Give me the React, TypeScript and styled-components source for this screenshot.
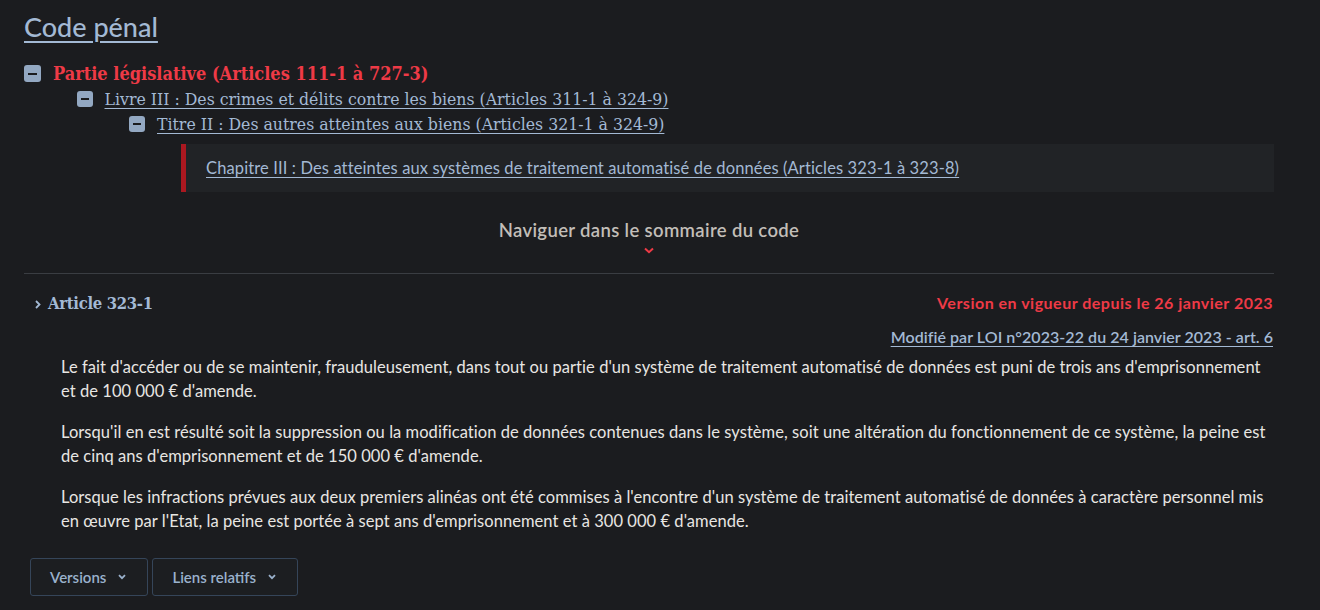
import React from "react";
import styled, { createGlobalStyle } from "styled-components";

const Global = createGlobalStyle`
  html, body { margin: 0; padding: 0; background: #1b1c1f; }
  body { font-family: Lato, "Liberation Sans", sans-serif; color: #e8e6e3; }
  * { box-sizing: border-box; }
`;

const SERIF = `"DejaVu Serif Condensed", "DejaVu Serif", serif`;
const SANS = `Lato, "Liberation Sans", sans-serif`;
const LINK = "#a3b9d4";
const RED = "#ee3a46";

const Page = styled.main`
  width: 1250px;
  margin-left: 24px;
  padding-top: 9px;
`;

const Title = styled.h1`
  margin: 0;
  font-family: ${SANS};
  font-size: 27px;
  font-weight: 500;
  line-height: 36px;
  color: ${LINK};
  text-decoration: underline;
  text-underline-offset: 4px;
  text-decoration-thickness: 2px;
`;

const Tree = styled.ul`
  list-style: none;
  margin: 16px 0 0;
  padding: 0;
`;

const TreeRow = styled.li<{ $level: number }>`
  display: flex;
  align-items: center;
  gap: 12px;
  height: 25px;
  padding-left: ${(p) => p.$level * 52.5}px;
`;

const Toggle = styled.span<{ $big?: boolean }>`
  position: relative;
  flex: none;
  width: ${(p) => (p.$big ? 17 : 16)}px;
  height: ${(p) => (p.$big ? 17 : 16)}px;
  border-radius: 3px;
  background: #93a8c2;
  &::after {
    content: "";
    position: absolute;
    left: 4px;
    right: 4px;
    top: calc(50% - 1px);
    height: 2px;
    background: #1b1c1f;
  }
`;

const NodeLabel = styled.span<{ $main?: boolean }>`
  font-family: ${SERIF};
  font-weight: ${(p) => (p.$main ? 700 : 400)};
  font-size: ${(p) => (p.$main ? "18px" : "17.5px")};
  color: ${(p) => (p.$main ? RED : LINK)};
  text-decoration: ${(p) => (p.$main ? "none" : "underline")};
  text-underline-offset: 3px;
  white-space: nowrap;
`;

const Chapter = styled.div`
  margin: 8px 0 0 157px;
  height: 48px;
  display: flex;
  align-items: center;
  padding-left: 20px;
  background: #212326;
  border-left: 5px solid #ab1820;
  font-family: ${SANS};
  font-size: 16.5px;
  letter-spacing: 0.12px;
  color: ${LINK};
  text-decoration: underline;
  text-underline-offset: 3px;
`;

const Navigate = styled.div`
  margin-top: 26px;
  display: flex;
  flex-direction: column;
  align-items: center;
  padding-bottom: 19px;
  border-bottom: 1px solid #3a3d42;
  font-family: ${SANS};
  font-size: 18.5px;
  font-weight: 600;
  letter-spacing: 0.35px;
  line-height: 24px;
  color: #c2beb8;
`;

const NavChevron = styled.svg`
  margin-top: 5px;
  margin-right: 1px;
  display: block;
`;

const ArticleHeader = styled.div`
  margin-top: 18px;
  display: flex;
  justify-content: space-between;
  align-items: flex-start;
`;

const ArticleTitle = styled.h2`
  margin: 0 0 0 11px;
  display: flex;
  align-items: center;
  gap: 7px;
  font-family: ${SERIF};
  font-size: 16.5px;
  letter-spacing: -0.3px;
  font-weight: 700;
  line-height: 24px;
  color: ${LINK};
`;

const Meta = styled.div`
  display: flex;
  flex-direction: column;
  align-items: flex-end;
  gap: 10px;
  margin-right: 1px;
  margin-top: -1px;
  font-family: ${SANS};
  font-size: 16px;
  font-weight: 700;
  line-height: 24px;
`;

const InForce = styled.span`
  color: ${RED};
  letter-spacing: 0.5px;
`;

const Modified = styled.a`
  color: ${LINK};
  font-weight: 600;
  letter-spacing: 0.05px;
  text-decoration: underline;
  text-underline-offset: 3px;
`;

const Body = styled.div`
  margin: 6px 0 0 37px;
`;

const Para = styled.p`
  margin: 0 0 17px;
  font-family: ${SANS};
  font-size: 16.5px;
  line-height: 24px;
  color: #e8e6e3;
  letter-spacing: 0.05px;
`;

const Actions = styled.div`
  margin: 25px 0 0 6px;
  display: flex;
  gap: 4px;
`;

const DropButton = styled.button`
  height: 38px;
  display: flex;
  align-items: center;
  gap: 12px;
  padding: 0 21px 0 19px;
  background: #1c1e21;
  border: 1px solid #354559;
  border-radius: 3px;
  font-family: ${SANS};
  font-size: 15px;
  font-weight: 600;
  color: #9ab1cc;
`;

const SmallChevron = () => (
  <svg width="8" height="6" viewBox="0 0 8 6">
    <path d="M1 1.2 L4 4.2 L7 1.2" fill="none" stroke="currentColor" strokeWidth="1.8" />
  </svg>
);

export default function App() {
  return (
    <>
      <Global />
      <Page>
        <Title>Code pénal</Title>
        <Tree>
          <TreeRow $level={0}>
            <Toggle $big />
            <NodeLabel $main>Partie législative (Articles 111-1 à 727-3)</NodeLabel>
          </TreeRow>
          <TreeRow $level={1}>
            <Toggle />
            <NodeLabel>Livre III : Des crimes et délits contre les biens (Articles 311-1 à 324-9)</NodeLabel>
          </TreeRow>
          <TreeRow $level={2}>
            <Toggle />
            <NodeLabel>Titre II : Des autres atteintes aux biens (Articles 321-1 à 324-9)</NodeLabel>
          </TreeRow>
        </Tree>
        <Chapter>
          Chapitre III : Des atteintes aux systèmes de traitement automatisé de données (Articles 323-1 à 323-8)
        </Chapter>
        <Navigate>
          Naviguer dans le sommaire du code
          <NavChevron width="10" height="7" viewBox="0 0 10 7">
            <path d="M1 1.5 L5 5.2 L9 1.5" fill="none" stroke={RED} strokeWidth="2" />
          </NavChevron>
        </Navigate>
        <ArticleHeader>
          <ArticleTitle>
            <svg width="6" height="9" viewBox="0 0 6 9">
              <path d="M1 1 L4.5 4.5 L1 8" fill="none" stroke={LINK} strokeWidth="1.8" />
            </svg>
            Article 323-1
          </ArticleTitle>
          <Meta>
            <InForce>Version en vigueur depuis le 26 janvier 2023</InForce>
            <Modified>Modifié par LOI n°2023-22 du 24 janvier 2023 - art. 6</Modified>
          </Meta>
        </ArticleHeader>
        <Body>
          <Para>
            Le fait d'accéder ou de se maintenir, frauduleusement, dans tout ou partie d'un système de traitement automatisé de données est puni de trois ans d'emprisonnement et de 100 000 € d'amende.
          </Para>
          <Para>
            Lorsqu'il en est résulté soit la suppression ou la modification de données contenues dans le système, soit une altération du fonctionnement de ce système, la peine est de cinq ans d'emprisonnement et de 150 000 € d'amende.
          </Para>
          <Para>
            Lorsque les infractions prévues aux deux premiers alinéas ont été commises à l'encontre d'un système de traitement automatisé de données à caractère personnel mis en œuvre par l'Etat, la peine est portée à sept ans d'emprisonnement et à 300 000 € d'amende.
          </Para>
        </Body>
        <Actions>
          <DropButton>
            Versions <SmallChevron />
          </DropButton>
          <DropButton>
            Liens relatifs <SmallChevron />
          </DropButton>
        </Actions>
      </Page>
    </>
  );
}
